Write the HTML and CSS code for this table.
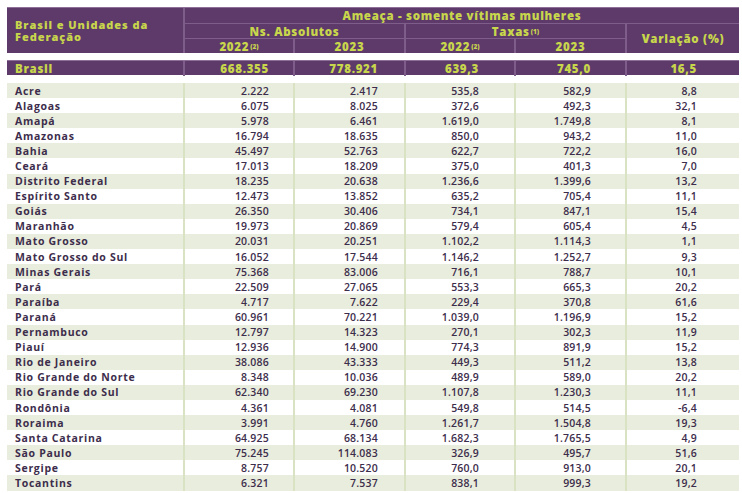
FILE: index.html
```html
<!DOCTYPE html>
<html lang="pt-BR">
<head>
<meta charset="utf-8">
<link rel="stylesheet" href="styles.css">
</head>
<body>
<div class="tbl">
  <div class="head">
    <div class="hc uf"><span class="l">Brasil e Unidades da</span><span class="l">Federação</span></div>
    <div class="hc ameaca">Ameaça - somente vítimas mulheres</div>
    <div class="hc ns">Ns. Absolutos</div>
    <div class="hc taxas">Taxas<sup>(1)</sup></div>
    <div class="hc var">Variação (%)</div>
    <div class="hc y1">2022<sup>(2)</sup></div>
    <div class="hc y2">2023</div>
    <div class="hc y3">2022<sup>(2)</sup></div>
    <div class="hc y4">2023</div>
  </div>
  <div class="row brasil">
    <div class="c name">Brasil</div><div class="c n1">668.355</div><div class="c n2">778.921</div><div class="c n3">639,3</div><div class="c n4">745,0</div><div class="c n5">16,5</div>
  </div>
  <div class="body" id="body"></div>
</div>
<script src="app.js"></script>
</body>
</html>
```
FILE: app.js
```js
const data = [
["Acre","2.222","2.417","535,8","582,9","8,8"],
["Alagoas","6.075","8.025","372,6","492,3","32,1"],
["Amapá","5.978","6.461","1.619,0","1.749,8","8,1"],
["Amazonas","16.794","18.635","850,0","943,2","11,0"],
["Bahia","45.497","52.763","622,7","722,2","16,0"],
["Ceará","17.013","18.209","375,0","401,3","7,0"],
["Distrito Federal","18.235","20.638","1.236,6","1.399,6","13,2"],
["Espírito Santo","12.473","13.852","635,2","705,4","11,1"],
["Goiás","26.350","30.406","734,1","847,1","15,4"],
["Maranhão","19.973","20.869","579,4","605,4","4,5"],
["Mato Grosso","20.031","20.251","1.102,2","1.114,3","1,1"],
["Mato Grosso do Sul","16.052","17.544","1.146,2","1.252,7","9,3"],
["Minas Gerais","75.368","83.006","716,1","788,7","10,1"],
["Pará","22.509","27.065","553,3","665,3","20,2"],
["Paraíba","4.717","7.622","229,4","370,8","61,6"],
["Paraná","60.961","70.221","1.039,0","1.196,9","15,2"],
["Pernambuco","12.797","14.323","270,1","302,3","11,9"],
["Piauí","12.936","14.900","774,3","891,9","15,2"],
["Rio de Janeiro","38.086","43.333","449,3","511,2","13,8"],
["Rio Grande do Norte","8.348","10.036","489,9","589,0","20,2"],
["Rio Grande do Sul","62.340","69.230","1.107,8","1.230,3","11,1"],
["Rondônia","4.361","4.081","549,8","514,5","-6,4"],
["Roraima","3.991","4.760","1.261,7","1.504,8","19,3"],
["Santa Catarina","64.925","68.134","1.682,3","1.765,5","4,9"],
["São Paulo","75.245","114.083","326,9","495,7","51,6"],
["Sergipe","8.757","10.520","760,0","913,0","20,1"],
["Tocantins","6.321","7.537","838,1","999,3","19,2"]
];
const body = document.getElementById("body");
const cls = ["name","n1","n2","n3","n4","n5"];
data.forEach((r) => {
  const row = document.createElement("div");
  row.className = "row";
  r.forEach((v, i) => {
    const c = document.createElement("div");
    c.className = "c " + cls[i];
    c.textContent = v;
    row.appendChild(c);
  });
  body.appendChild(row);
});
```
FILE: styles.css
```css
* { box-sizing: border-box; }
html, body { margin: 0; padding: 0; background: #fff; }
body {
  font-family: "Open Sans", "Noto Sans", sans-serif;
  font-size: 10.5px;
  color: #3d2d4c;
}
.tbl {
  width: 732px;
  margin: 7px 0 0 7px;
}
.head {
  display: grid;
  grid-template-columns: 176px 110px 111px 110px 111px 114px;
  grid-template-rows: 15px 15px 15px;
  background: #5e3a6b;
  color: #c8d64c;
  font-weight: 800;
  font-size: 11.5px;
  letter-spacing: 0.7px;
  border-top: 1px solid #8d6f98;
}
.hc {
  display: flex;
  align-items: center;
  justify-content: center;
  white-space: nowrap;
  line-height: 13px;
  border-left: 2px solid #7e5d8a;
}
.hc sup { font-size: 6.5px; letter-spacing: 0; vertical-align: 5px; margin-left: 1px; }
.uf {
  grid-column: 1; grid-row: 1 / 4;
  flex-direction: column;
  align-items: flex-start;
  justify-content: center;
  padding-left: 8px;
  border-left: none;
}
.uf .l {
  display: block;
  font-size: 11px;
  letter-spacing: 0.95px;
  height: 12px;
  line-height: 12px;
}
.ameaca { grid-column: 2 / 7; grid-row: 1; }
.ns { grid-column: 2 / 4; grid-row: 2; border-top: 1px solid #7e5d8a; }
.taxas { grid-column: 4 / 6; grid-row: 2; border-top: 1px solid #7e5d8a; }
.var { grid-column: 6; grid-row: 2 / 4; border-top: 1px solid #7e5d8a; }
.y1 { grid-column: 2; grid-row: 3; border-top: 1px solid #7e5d8a; }
.y2 { grid-column: 3; grid-row: 3; border-top: 1px solid #7e5d8a; }
.y3 { grid-column: 4; grid-row: 3; border-top: 1px solid #7e5d8a; }
.y4 { grid-column: 5; grid-row: 3; border-top: 1px solid #7e5d8a; }

.row {
  display: grid;
  grid-template-columns: 176px 110px 111px 110px 111px 114px;
  height: 15.1px;
  align-items: stretch;
}
.c {
  display: flex;
  align-items: center;
  justify-content: flex-end;
  white-space: nowrap;
  font-weight: 600;
  letter-spacing: 0.2px;
  border-left: 2px solid #d9e3c4;
}
.c.name {
  justify-content: flex-start;
  padding-left: 8px;
  border-left: none;
  font-weight: 700;
  letter-spacing: 0.7px;
}
.n1 { padding-right: 24px; }
.n2 { padding-right: 26px; }
.n3 { padding-right: 35px; }
.n4 { padding-right: 34px; }
.n5 { padding-right: 42px; }

.brasil {
  margin-top: 7px;
  height: 15px;
  background: #5e3a6b;
  color: #c8d64c;
  border-top: 1px solid #8d6f98;
}
.brasil .c {
  font-weight: 800;
  font-size: 11.5px;
  letter-spacing: 0.7px;
  border-left-color: #7e5d8a;
}

.body { margin-top: 8px; }
.body .row:nth-child(odd) { background: #e9eddd; }
```
